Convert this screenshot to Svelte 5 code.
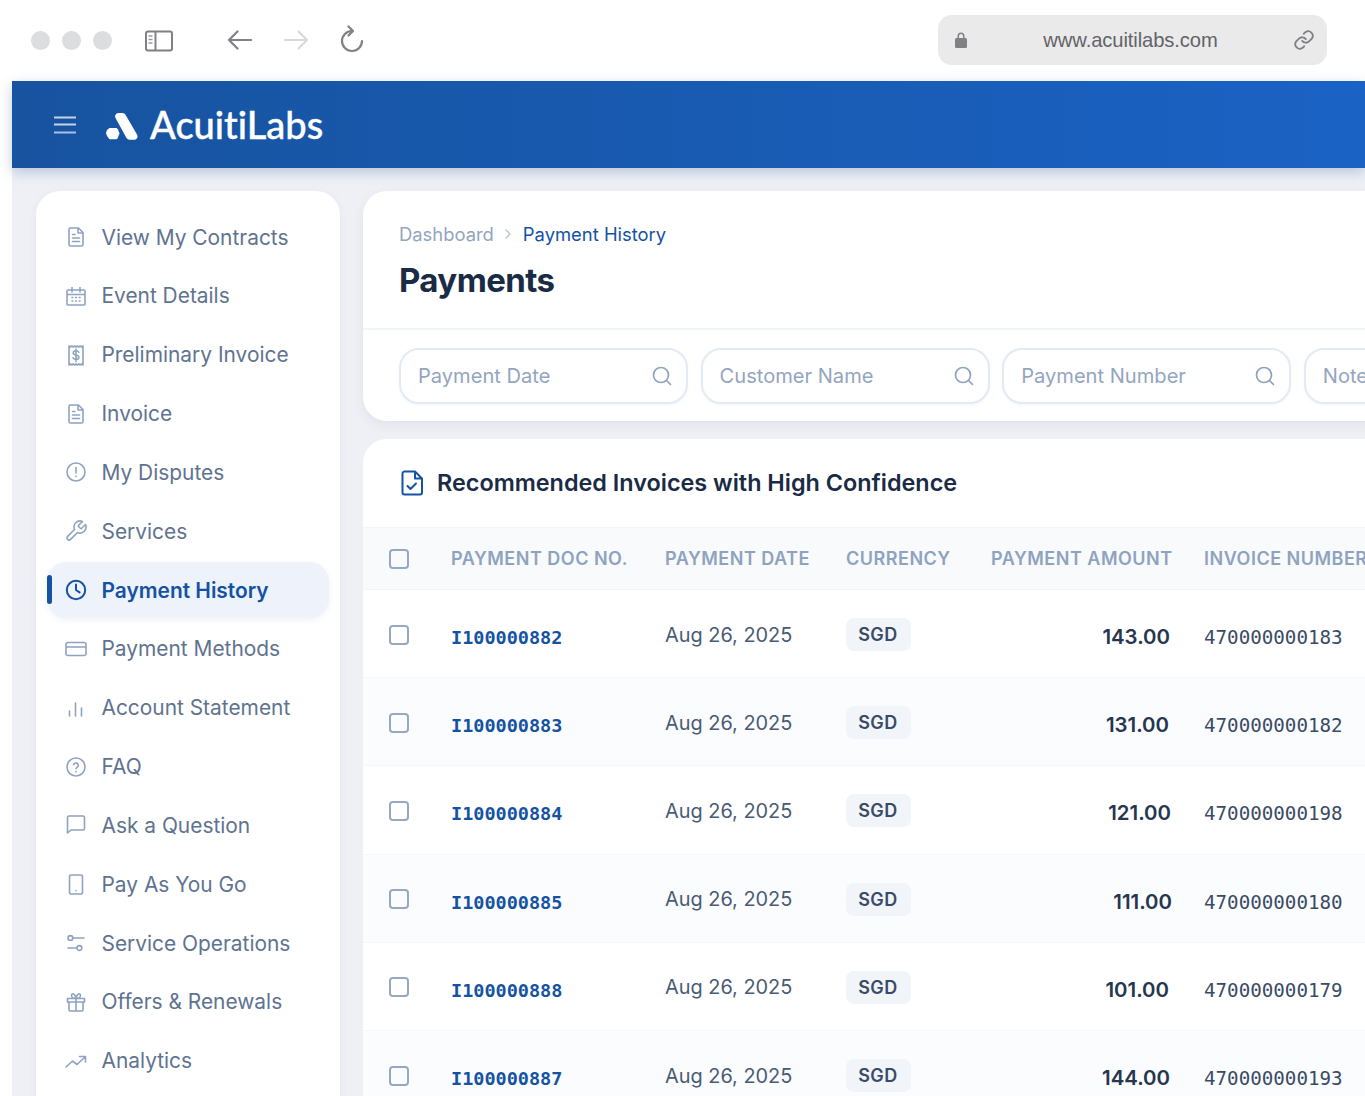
<script>
  const ic = {
    doc: 'M6 3h8.500L19 7.500V19.500a1.500 1.500 0 0 1-1.500 1.500h-11A1.500 1.500 0 0 1 5 19.500v-15A1.500 1.500 0 0 1 6 3zM14 3v5h5M8.500 9.500H11M8.500 13h7M8.500 16.500h7',
    cal: 'M4 6h16a1 1 0 0 1 1 1v13a1 1 0 0 1-1 1H4a1 1 0 0 1-1-1V7a1 1 0 0 1 1-1zM3 10.500h18M8 3.500V8M16 3.500V8M8 13.500h.8M11.600 13.500h.8M15.200 13.500h.8M8 17h.8M11.600 17h.8M15.200 17h.8',
    rec: 'M5 3l1.400 1 1.400-1 1.400 1 1.400-1 1.400 1 1.400-1 1.400 1 1.400-1 1.400 1L19 3v19l-1.400-1-1.400 1-1.400-1-1.400 1-1.400-1-1.400 1-1.400-1-1.400 1-1.400-1L5 22zM14.800 9.200c-.4-.9-1.400-1.400-2.800-1.400-1.600 0-2.800.8-2.800 2.100 0 2.900 5.700 1.400 5.700 4.400 0 1.300-1.200 2.100-2.900 2.100-1.500 0-2.600-.6-3-1.600M12 6.200v12.400',
    alert: 'M3 12a9 9 0 1 0 18 0a9 9 0 1 0-18 0zM12 7.500v5.500M12 16v.4',
    wrench: 'M14.700 6.300a1 1 0 0 0 0 1.400l1.600 1.600a1 1 0 0 0 1.400 0l3.770-3.770a6 6 0 0 1-7.940 7.940l-6.910 6.910a2.120 2.120 0 0 1-3-3l6.910-6.910a6 6 0 0 1 7.940-7.940l-3.760 3.760z',
    clock: 'M2.800 12a9.200 9.200 0 1 0 18.400 0a9.200 9.200 0 1 0-18.400 0zM12 6.500V12l3.600 2.400',
    card: 'M4 5.500h16a2 2 0 0 1 2 2v9a2 2 0 0 1-2 2H4a2 2 0 0 1-2-2v-9a2 2 0 0 1 2-2zM2 10h20',
    bars: 'M5.500 15v5M11.500 7v13M17.500 12v8',
    help: 'M3 12a9 9 0 1 0 18 0a9 9 0 1 0-18 0zM9.600 9.600a2.500 2.500 0 0 1 4.800.8c0 1.700-2.400 2-2.400 3.400M12 16.600v.4',
    msg: 'M3.500 4.500a1.500 1.500 0 0 1 1.500-1.500h14a1.500 1.500 0 0 1 1.500 1.500v11A1.500 1.500 0 0 1 19 17H7l-3.500 3z',
    tab: 'M7 3h10a1.500 1.500 0 0 1 1.500 1.500v16a1.500 1.500 0 0 1-1.500 1.500H7a1.500 1.500 0 0 1-1.500-1.500v-16A1.500 1.500 0 0 1 7 3zM12 18.500v.3',
    sliders: 'M4 7a2.400 2.400 0 1 0 4.800 0a2.400 2.400 0 1 0-4.800 0zM9 7h11M13 17a2.400 2.400 0 1 0 4.800 0a2.400 2.400 0 1 0-4.800 0zM4 17h9',
    gift: 'M3.500 8.500h17v3.500h-17zM5 12v8a1 1 0 0 0 1 1h12a1 1 0 0 0 1-1v-8M12 8.500V21M12 8.500C10 8.500 7.500 7.500 7.500 5.500c0-2.500 3.500-2.800 4.500 3 1-5.800 4.500-5.500 4.500-3 0 2-2.500 3-4.500 3',
    trend: 'M2 18l6.500-6 4.500 3.500L21 8M15.500 7.500H21.500V13'
  };
  const nav = [
    ['View My Contracts','doc'],['Event Details','cal'],['Preliminary Invoice','rec'],['Invoice','doc'],
    ['My Disputes','alert'],['Services','wrench'],['Payment History','clock',true],['Payment Methods','card'],
    ['Account Statement','bars'],['FAQ','help'],['Ask a Question','msg'],['Pay As You Go','tab'],
    ['Service Operations','sliders'],['Offers & Renewals','gift'],['Analytics','trend']
  ];
  const filters = ['Payment Date','Customer Name','Payment Number','Notes'];
  const rows = [
    ['I100000882','143.00','470000000183',2],['I100000883','131.00','470000000182',3],
    ['I100000884','121.00','470000000198',1],['I100000885','111.00','470000000180',0],
    ['I100000888','101.00','470000000179',3],['I100000887','144.00','470000000193',2]
  ];
</script>

<div class="page">
  <div class="chrome">
    <div class="dots"><span></span><span></span><span></span></div>
    <svg class="side" width="30" height="24" viewBox="0 0 30 24" fill="none" stroke="#808085" stroke-width="2">
      <rect x="2" y="2.500" width="26" height="19" rx="2"/>
      <path d="M11.500 2.500v19"/>
      <path d="M4.500 7h4M4.500 10.500h4M4.500 14h4" stroke-width="1.500" stroke="#9a9a9e"/>
    </svg>
    <svg class="back" width="26" height="24" viewBox="0 0 26 24" fill="none" stroke="#808085" stroke-width="2.200" stroke-linecap="round" stroke-linejoin="round">
      <path d="M24 12H2M10.500 3.500L2 12l8.500 8.500"/>
    </svg>
    <svg class="fwd" width="26" height="24" viewBox="0 0 26 24" fill="none" stroke="#d9d9db" stroke-width="2.200" stroke-linecap="round" stroke-linejoin="round">
      <path d="M2 12h22M15.500 3.500L24 12l-8.500 8.500"/>
    </svg>
    <svg class="rel" width="26" height="30" viewBox="0 0 26 30" fill="none" stroke="#808085" stroke-width="2.200" stroke-linecap="round" stroke-linejoin="round">
      <path d="M23 17a10 10 0 1 1-10-10M9.500 2.500L14 7l-4.500 4.500"/>
    </svg>
    <div class="url">
      <svg width="14" height="18" viewBox="0 0 14 18" fill="#808085"><path d="M3.500 7V5a3.500 3.500 0 0 1 7 0v2H9V5a2 2 0 0 0-4 0v2z"/><rect x="1" y="7" width="12" height="10" rx="1.500"/></svg>
      <span>www.acuitilabs.com</span>
      <svg width="22" height="22" viewBox="0 0 24 24" fill="none" stroke="#808085" stroke-width="2" stroke-linecap="round"><path d="M10 13a5 5 0 0 0 7.500.5l3-3a5 5 0 0 0-7-7l-1.700 1.700"/><path d="M14 11a5 5 0 0 0-7.500-.5l-3 3a5 5 0 0 0 7 7l1.700-1.700"/></svg>
    </div>
  </div>

  <div class="app">
    <header class="bar">
      <svg class="burger" width="24" height="18" viewBox="0 0 24 18" stroke-width="2">
        <path d="M1 1.500h22" stroke="#c5d4ea"/><path d="M1 8.500h22" stroke="#c5d4ea"/><path d="M1 16.500h22" stroke="#a9c0e2"/>
      </svg>
      <svg class="logo" width="32" height="28" viewBox="0 0 32 28" fill="#fff">
        <path d="M3.500 16h7l1.500 1.500 1.500 4-2 5-1 .7H3.500L1 24l-1-3 1-3z"/>
        <path d="M9.300 3.200Q10.300 1 12.500 1h4q2 0 3 1.700l11.500 19.800q1.500 3-1 4.800-.8.500-2.500.5h-4q-2 0-3-1.800L9.500 6q-.8-1.500-.2-2.800z"/>
      </svg>
      <span class="brand">AcuitiLabs</span>
    </header>

    <div class="content">
      <aside class="sidebar">
        {#each nav as [label, icon, active]}
          <div class="item" class:active>
            <svg width="24" height="24" viewBox="0 0 24 24" fill="none" stroke="currentColor" stroke-width={active ? 2 : 1.600} stroke-linecap="round" stroke-linejoin="round"><path d={ic[icon]}/></svg>
            <span>{label}</span>
          </div>
        {/each}
      </aside>

      <main class="main">
        <section class="card head">
          <div class="titles">
            <div class="crumbs">
              <span class="c1">Dashboard</span>
              <svg width="10" height="12" viewBox="0 0 10 12" fill="none" stroke="#b4c2d6" stroke-width="1.300" stroke-linecap="round" stroke-linejoin="round"><path d="M3 2l4 4-4 4"/></svg>
              <span class="c2">Payment History</span>
            </div>
            <h1>Payments</h1>
          </div>
          <div class="filters">
            {#each filters as f}
              <div class="filter">
                <span>{f}</span>
                <svg width="22" height="22" viewBox="0 0 22 22" fill="none" stroke="#8fa3c0" stroke-width="1.700" stroke-linecap="round"><circle cx="10" cy="10" r="7.500"/><path d="M15.500 15.500L19.500 19.500"/></svg>
              </div>
            {/each}
          </div>
        </section>

        <section class="card table">
          <div class="ttl">
            <svg width="24" height="26" viewBox="0 0 24 26" fill="none" stroke="#1553a2" stroke-width="2" stroke-linecap="round" stroke-linejoin="round">
              <path d="M4.500 1.500H15l7 7v14a2 2 0 0 1-2 2H4.500a2 2 0 0 1-2-2v-19a2 2 0 0 1 2-2zM15 1.500v7h7M7.500 16l3 3 5.500-5.500"/>
            </svg>
            <h2>Recommended Invoices with High Confidence</h2>
          </div>
          <div class="row th">
            <div class="cb"></div>
            <div>PAYMENT DOC NO.</div>
            <div>PAYMENT DATE</div>
            <div>CURRENCY</div>
            <div class="r">PAYMENT AMOUNT</div>
            <div class="l">INVOICE NUMBER</div>
          </div>
          {#each rows as [doc, amt, inv, nudge], i}
            <div class="row td" class:alt={i % 2 === 1}>
              <div class="cb"></div>
              <div class="docno">{doc}</div>
              <div class="date">Aug 26, 2025</div>
              <div><span class="badge">SGD</span></div>
              <div class="r amt" style="padding-right: {nudge}px">{amt}</div>
              <div class="l inv">{inv}</div>
            </div>
          {/each}
        </section>
      </main>
    </div>
  </div>
</div>

<style>
  :global(body) { margin: 0; background: #fff; }
  .page { width: 1365px; height: 1096px; overflow: hidden; font-family: Inter, "Liberation Sans", sans-serif; background: #fff; }
  .chrome { height: 81px; display: flex; align-items: center; position: relative; padding-left: 30.500px; box-sizing: border-box; }
  .dots { display: flex; gap: 12px; }
  .dots span { width: 19px; height: 19px; border-radius: 50%; background: #dcdddf; }
  .side { margin-left: 32px; }
  .back { margin-left: 53px; margin-top: -1px; }
  .fwd { margin-left: 30px; margin-top: -1px; }
  .rel { margin-left: 30px; margin-top: -3px; }
  .url { margin-left: auto; margin-right: 38px; width: 389px; height: 50px; margin-top: -1px; border-radius: 14px; background: #eaeaeb; display: flex; align-items: center; justify-content: space-between; padding: 0 12px 0 16px; box-sizing: border-box; }
  .url span { font: 20.200px "Liberation Sans", sans-serif; color: #636368; letter-spacing: -0.100px; }
  .app { margin-left: 12px; height: 1015px; background: #eef0f5; }
  .bar { height: 87px; background: linear-gradient(90deg, #17539f, #1a62c4); display: flex; align-items: center; box-shadow: 0 4px 12px rgba(24, 72, 140, .25); position: relative; }
  .burger { margin-left: 41px; }
  .logo { margin-left: 29px; margin-top: 2px; }
  .brand { margin-left: 12px; margin-top: -2px; font: 500 38px Lato, sans-serif; font-variant-ligatures: none; -webkit-text-stroke: 0.400px #fff; color: #fff; }
  .content { display: flex; gap: 23px; padding: 23px 0 0 24px; }
  .sidebar { width: 304px; flex: none; height: 1000px; box-sizing: border-box; background: #fff; border-radius: 24px; padding: 18px 11px; box-shadow: 0 2px 10px rgba(40, 60, 100, .05); display: flex; flex-direction: column; gap: 2.850px; }
  .item { height: 56px; flex: none; display: flex; align-items: center; gap: 13.500px; padding-left: 17px; border-radius: 20px; font-size: 20.900px; color: #5f7391; position: relative; }
  .item svg { color: #8fa3c0; flex: none; }
  .item.active { background: #edf2fb; color: #1553a2; font-weight: 600; box-shadow: 0 2px 6px rgba(40, 80, 160, .08); }
  .item.active svg { color: #1553a2; }
  .item.active::before { content: ""; position: absolute; left: 0; top: 13px; width: 5px; height: 29px; background: #1553a2; border-radius: 3px; }
  .main { width: 1300px; flex: none; display: flex; flex-direction: column; gap: 18px; }
  .card { background: #fff; border-radius: 24px; }
  .head { height: 230px; box-shadow: 0 4px 12px rgba(40, 60, 100, .07); overflow: hidden; }
  .titles { height: 139px; box-sizing: border-box; border-bottom: 2px solid #f1f4f8; padding: 29px 36px 0; }
  .crumbs { display: flex; align-items: center; gap: 9.500px; font-size: 18.400px; height: 28px; }
  .c1 { color: #93a5c0; }
  .c2 { color: #1553a2; }
  h1 { margin: 10px 0 0; font-size: 33px; font-weight: 700; color: #1a2b45; letter-spacing: -0.600px; line-height: 44px; }
  .filters { display: flex; gap: 12.600px; padding: 18px 36px 0; }
  .filter { width: 289px; height: 56px; flex: none; box-sizing: border-box; border: 2px solid #e4eaf3; border-radius: 20px; display: flex; align-items: center; justify-content: space-between; padding: 0 13px 0 17px; color: #93a5c0; font-size: 20.100px; box-shadow: 0 1px 3px rgba(40, 60, 100, .05); }
  .table { flex: 1; height: 700px; overflow: hidden; }
  .ttl { height: 88px; display: flex; align-items: center; gap: 13px; padding-left: 37px; }
  h2 { margin: -1px 0 0; font-size: 23.400px; font-weight: 600; color: #1a2b45; }
  .row { display: grid; grid-template-columns: 62px 214px 181px 145px 181px 1fr; align-items: center; padding-left: 26px; white-space: nowrap; }
  .th { height: 63px; background: #f8fafc; border-top: 1px solid #f1f4f8; border-bottom: 1px solid #f1f4f8; box-sizing: border-box; color: #8fa3c0; font-size: 18px; font-weight: 600; letter-spacing: 0.500px; }
  .th .r { padding-right: 1px; }
  .td { height: 88.200px; box-sizing: border-box; border-bottom: 1px solid #f5f7fa; padding-top: 6px; }
  .alt { background: #fbfcfd; }
  .cb { width: 20px; height: 20px; box-sizing: border-box; border: 2px solid #96a8c4; border-radius: 4px; margin-top: -4px; }
  .th .cb { margin-top: 0; }
  .r { text-align: right; }
  .l { padding-left: 32px; }
  .docno { font: 700 18.500px "DejaVu Sans Mono", monospace; color: #1553a2; margin-top: 2px; }
  .date { font-size: 19.900px; color: #4a5b74; margin-top: -4px; }
  .badge { display: inline-flex; align-items: center; justify-content: center; box-sizing: border-box; padding-right: 1px; width: 65px; height: 33px; background: #f1f4f9; border-radius: 8px; font-size: 18px; font-weight: 600; letter-spacing: 0.500px; color: #3a4b66; margin-top: -4px; vertical-align: middle; }
  .amt { font-size: 20.400px; font-weight: 600; color: #26364f; }
  .inv { font: 19.200px "DejaVu Sans Mono", monospace; color: #3a4b66; margin-top: 2px; }
</style>
